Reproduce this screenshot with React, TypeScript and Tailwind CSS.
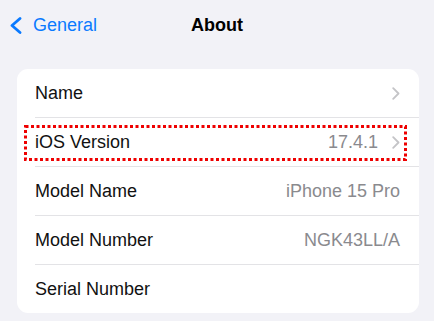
import React from 'react';

const rows: { label: string; value?: string; chevron?: boolean }[] = [
  { label: 'Name', chevron: true },
  { label: 'iOS Version', value: '17.4.1', chevron: true },
  { label: 'Model Name', value: 'iPhone 15 Pro' },
  { label: 'Model Number', value: 'NGK43LL/A' },
  { label: 'Serial Number' },
];

function Chevron() {
  return (
    <svg width="8" height="13" viewBox="0 0 8 13" fill="none" className="shrink-0">
      <path d="M1.2 1.2 L6.5 6.5 L1.2 11.8" stroke="#c4c4c7" strokeWidth="1.8" strokeLinecap="round" strokeLinejoin="round" />
    </svg>
  );
}

export default function App() {
  return (
    <div className="w-[434px] h-[321px] bg-[#f2f2f7] overflow-hidden font-['Liberation_Sans',Arial,sans-serif]">
      {/* nav bar */}
      <div className="grid grid-cols-[1fr_auto_1fr] items-center h-[50px]">
        <div className="flex items-center gap-[10px] pl-[9px] text-[#0a7aff] text-[18px]">
          <svg width="14" height="17" viewBox="0 0 14 17" fill="none">
            <path d="M11 1.5 L3 8.5 L11 15.5" stroke="#0a7aff" strokeWidth="2.8" strokeLinecap="round" strokeLinejoin="round" />
          </svg>
          <span>General</span>
        </div>
        <div className="text-[18px] font-bold text-black">About</div>
        <div />
      </div>

      {/* list */}
      <div className="relative mt-[19px] ml-[17px] mr-[15px] bg-white rounded-[11px]">
        {rows.map((r, i) => (
          <div key={r.label} className="pl-[18px]">
            <div
              className={`flex items-center pr-[19px] ${i === rows.length - 1 ? 'h-[48px]' : 'h-[49px] border-b border-[#e3e3e6]'}`}
            >
              <span className="text-[18px] text-[#111]">{r.label}</span>
              <span className="ml-auto text-[18px] text-[#8a8a8e]">{r.value}</span>
              {r.chevron && (
                <span className={r.value ? 'ml-[14px]' : ''}>
                  <Chevron />
                </span>
              )}
            </div>
          </div>
        ))}

        {/* red dotted highlight */}
        <div className="absolute left-[7px] top-[56px] w-[383px] h-[36px] pointer-events-none">
          <svg width="383" height="36" viewBox="0 0 383 36">
            <rect x="1.5" y="1.5" width="380" height="33" fill="none" stroke="#ee0000" strokeWidth="3" strokeDasharray="3 2.5" />
          </svg>
        </div>
      </div>
    </div>
  );
}
